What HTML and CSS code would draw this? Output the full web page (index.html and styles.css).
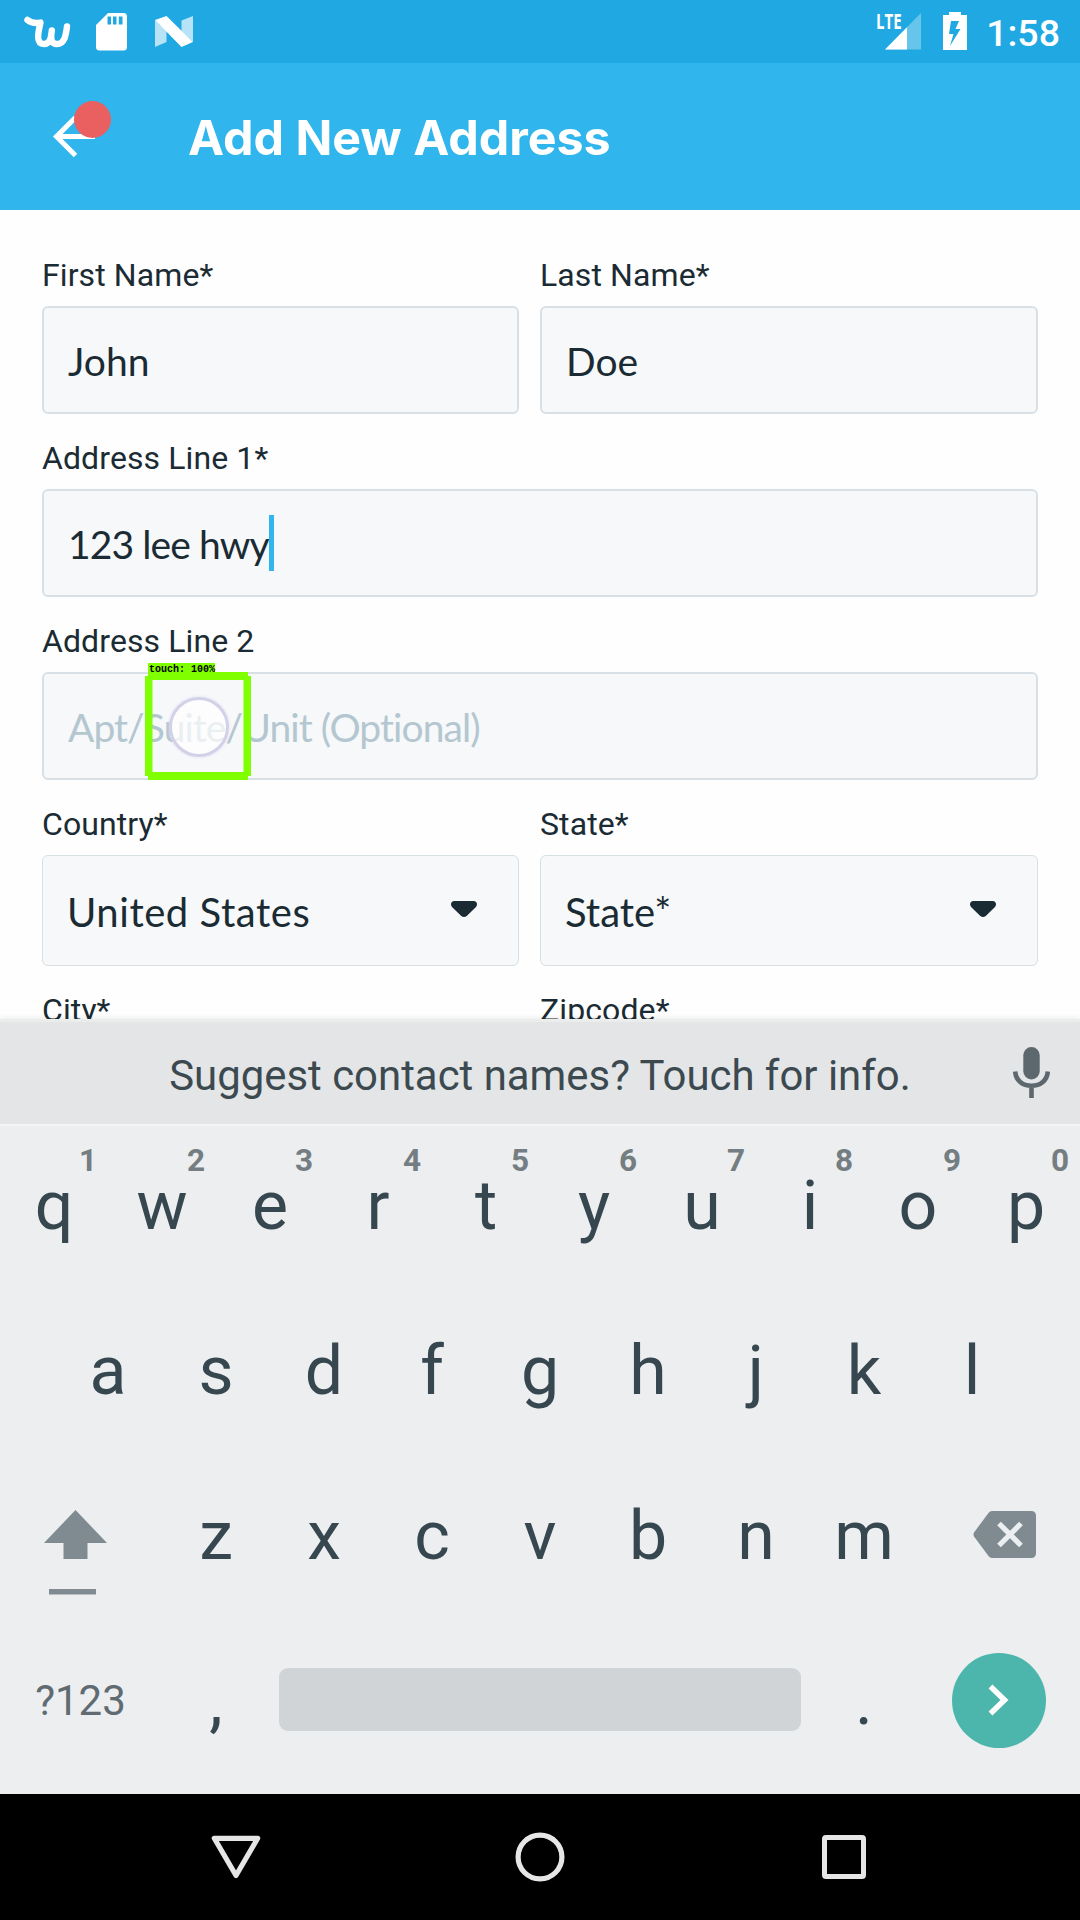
FILE: index.html
```html
<!DOCTYPE html>
<html lang="en">
<head>
<meta charset="utf-8">
<title>Add New Address</title>
<link rel="stylesheet" href="styles.css">
</head>
<body>
<div class="screen">
  <div class="status-bar">
    <div class="status-left">
      <svg class="ic-wish" width="47" height="34" viewBox="0 0 47 34"><path d="M3.500 5C8 8.500 12.500 8.500 16.500 7.500C14.500 16 11 29 20 29C26 29 27 23 27.800 15.500C26.500 24 27 29 33 29C41 29 42 19 43 11.500" fill="none" stroke="#fff" stroke-width="6.400" stroke-linecap="round" stroke-linejoin="round"/></svg>
      <svg class="ic-sd" width="31" height="38" viewBox="0 0 31 38"><path fill="#fff" fill-rule="evenodd" d="M12 0H27.500Q31 0 31 3.500V34Q31 37.500 27.500 37.500H3.500Q0 37.500 0 34V12ZM11.500 3.500V11.500H15V3.500ZM17 3.500V11.500H20.500V3.500ZM22.800 3.500V11.500H26.500V3.500Z"/></svg>
      <svg class="ic-n" width="38" height="31" viewBox="0 0 38 31"><path fill="#fff" fill-opacity=".68" d="M0 4L11.500 15V26L0 31ZM38 0V26L26.500 15V4.500Z"/><path fill="#fff" d="M0 4L11.500 0L38 26L26.500 31Z"/></svg>
    </div>
    <div class="status-right">
      <div class="signal">
        <svg width="46" height="38" viewBox="0 0 46 38"><path fill="#fff" fill-opacity=".32" d="M9 36.500L45 0V36.500Z"/><path fill="#fff" d="M9 36.500L31 14.200V36.500Z"/></svg>
        <span class="lte">LTE</span>
      </div>
      <svg class="ic-batt" width="24" height="38" viewBox="0 0 24 38"><path fill="#fff" fill-rule="evenodd" d="M6 0H18V3H24V38H0V3H6ZM8 9L6 22H10.500L7 34L17.500 17H12.500L16 9Z"/></svg>
      <span class="clock">1:58</span>
    </div>
  </div>

  <header class="app-bar">
    <div class="back">
      <svg width="44" height="44" viewBox="0 0 44 44"><path d="M23.500 2.500L4.500 21.500L23.500 40.500M4.500 21.500H43" fill="none" stroke="#fff" stroke-width="5"/></svg>
      <span class="badge"></span>
    </div>
    <h1 class="title">Add New Address</h1>
  </header>

  <main class="form">
    <div class="row split">
      <div class="field"><div class="label">First Name*</div><div class="input">John</div></div>
      <div class="field"><div class="label">Last Name*</div><div class="input">Doe</div></div>
    </div>
    <div class="row">
      <div class="field"><div class="label">Address Line 1*</div><div class="input"><span class="address">123 lee hwy</span><span class="caret"></span></div></div>
    </div>
    <div class="row">
      <div class="field">
        <div class="label">Address Line 2</div>
        <div class="input"><span class="placeholder">Apt/Suite/Unit (Optional)</span>
          <div class="touch-dot"></div>
          <svg class="touch-box" width="106" height="108" viewBox="0 0 106 108"><path fill="#80ff00" fill-rule="evenodd" d="M3 0H103V4H106V104H103V108H3V104H0V4H3ZM7.500 8V100H98.500V8Z"/></svg>
          <span class="touch-label">touch: 100%</span>
        </div>
      </div>
    </div>
    <div class="row split">
      <div class="field"><div class="label">Country*</div><div class="select"><span class="country">United States</span><svg class="arrow" width="26" height="17" viewBox="0 0 26 17"><path fill="#1b2b33" d="M3.500 0H22.500Q26 0 26 3.500Q26 5.200 24.500 6.600L16 14.700Q13 17.500 10 14.700L1.500 6.600Q0 5.200 0 3.500Q0 0 3.500 0Z"/></svg></div></div>
      <div class="field"><div class="label">State*</div><div class="select"><span>State*</span><svg class="arrow" width="26" height="17" viewBox="0 0 26 17"><path fill="#1b2b33" d="M3.500 0H22.500Q26 0 26 3.500Q26 5.200 24.500 6.600L16 14.700Q13 17.500 10 14.700L1.500 6.600Q0 5.200 0 3.500Q0 0 3.500 0Z"/></svg></div></div>
    </div>
    <div class="row split">
      <div class="field"><div class="label">City*</div></div>
      <div class="field"><div class="label">Zipcode*</div></div>
    </div>
  </main>

  <section class="keyboard">
    <div class="suggest">
      <span class="suggest-text">Suggest contact names? Touch for info.</span>
      <svg class="mic" width="37" height="51" viewBox="0 0 37 51"><rect x="10.300" y="0" width="16.400" height="32.500" rx="8.200" fill="#5c686e"/><path d="M2.200 24.500C2.800 33.500 9.500 38.800 18.500 38.800S34.200 33.500 34.800 24.500M18.500 38.800V51" fill="none" stroke="#5c686e" stroke-width="4.600"/></svg>
    </div>
    <div class="keys">
      <div class="key-row">
        <span class="key">q<b>1</b></span><span class="key">w<b>2</b></span><span class="key">e<b>3</b></span><span class="key">r<b>4</b></span><span class="key">t<b>5</b></span><span class="key">y<b>6</b></span><span class="key">u<b>7</b></span><span class="key">i<b>8</b></span><span class="key">o<b>9</b></span><span class="key">p<b>0</b></span>
      </div>
      <div class="key-row home">
        <span class="key">a</span><span class="key">s</span><span class="key">d</span><span class="key">f</span><span class="key">g</span><span class="key">h</span><span class="key">j</span><span class="key">k</span><span class="key">l</span>
      </div>
      <div class="key-row lower">
        <span class="key shift"><svg width="63" height="85" viewBox="0 0 63 85"><path fill="#7f8b90" d="M31.500 0L63 33H43.500V49H19.500V33H0ZM5 79H52V84.500H5Z"/></svg></span>
        <span class="key">z</span><span class="key">x</span><span class="key">c</span><span class="key">v</span><span class="key">b</span><span class="key">n</span><span class="key">m</span>
        <span class="key backspace"><svg width="63" height="47" viewBox="0 0 63 47"><path fill="#7f8b90" d="M19 0H58Q63 0 63 5V42Q63 47 58 47H19Q17 47 15.500 45L1 25.500Q0 23.500 1 21.500L15.500 2Q17 0 19 0Z"/><path d="M26 12.500L48 34.500M48 12.500L26 34.500" stroke="#eceff1" stroke-width="5.200"/></svg></span>
      </div>
      <div class="key-row bottom">
        <span class="key symbols">?123</span>
        <span class="key">,</span>
        <span class="key space"></span>
        <span class="key">.</span>
        <span class="key enter"><svg width="94" height="95" viewBox="0 0 94 95"><ellipse cx="47" cy="47.500" rx="47" ry="47.500" fill="#4db6ac"/><path d="M38.500 33.500L52.500 47L38.500 60.500" fill="none" stroke="#fff" stroke-width="5.500"/></svg></span>
      </div>
    </div>
  </section>

  <nav class="nav-bar">
    <svg width="50" height="50" viewBox="0 0 50 50"><path d="M3.300 6.300H46.700L25 43.500Z" fill="none" stroke="#e6e6e6" stroke-width="5.200" stroke-linejoin="round"/></svg>
    <svg width="50" height="50" viewBox="0 0 50 50"><circle cx="25" cy="25" r="21.900" fill="none" stroke="#e6e6e6" stroke-width="5.200"/></svg>
    <svg width="50" height="50" viewBox="0 0 50 50"><rect x="5.500" y="5.500" width="39" height="39" rx="1.500" fill="none" stroke="#e6e6e6" stroke-width="5"/></svg>
  </nav>
</div>
</body>
</html>
```
FILE: styles.css
```css
* { box-sizing: border-box; }
body { margin: 0; font-family: Roboto, "Liberation Sans", sans-serif; }
svg { display: block; flex: none; }
.screen { width: 1080px; height: 1920px; display: flex; flex-direction: column; overflow: hidden; background: #fefefe; }

.status-bar { height: 63px; flex: none; background: #1fa8e2; display: flex; justify-content: space-between; padding: 12px 20px 0 24px; }
.status-left, .status-right { display: flex; align-items: flex-start; }
.ic-wish { margin-top: 3px; }
.ic-sd { margin: 1px 0 0 24.500px; }
.ic-n { margin: 4px 0 0 28px; }
.signal { position: relative; margin-top: 1px; }
.lte { position: absolute; left: 0; top: -1px; font: 700 21.500px/18px "Open Sans", sans-serif; color: #fff; transform: scaleX(.7); transform-origin: left; }
.ic-batt { margin-left: 21px; }
.clock { margin-left: 19px; font-size: 37.500px; font-weight: 500; line-height: 42px; color: #fff; }

.app-bar { height: 147px; flex: none; background: #30b5ec; display: flex; align-items: center; padding-left: 52px; }
.back { position: relative; }
.badge { position: absolute; left: 22px; top: -14px; width: 37px; height: 37px; border-radius: 50%; background: #ea6060; }
.title { margin: 0 0 0 92px; padding-top: 3px; font: 700 48.400px/60px Inter, sans-serif; color: #fff; white-space: nowrap; }

.form { height: 809px; flex: none; overflow: hidden; padding: 34px 42px 0; display: flex; flex-direction: column; gap: 13px; color: #1b2b33; }
.row { display: grid; flex: none; }
.split { grid-template-columns: 477px 498px; column-gap: 21px; }
.label { height: 62px; line-height: 62px; font-size: 32px; letter-spacing: .1px; }
.input, .select { font: 400 39px/50px Lato, sans-serif; display: flex; align-items: center; border-radius: 6px; background: #f6f8fa; }
.input { position: relative; height: 108px; border: 2px solid #d8e0e5; padding: 1px 0 0 24px; }
.select { height: 111px; border: 1px solid #d8dfe3; padding: 2px 41px 0 24px; justify-content: space-between; font-size: 40px; }
.arrow { margin-top: -4px; }
.address { letter-spacing: -.9px; }
.country { letter-spacing: .55px; }
.caret { width: 5px; height: 56px; background: #30b5ec; margin-top: -1px; }
.placeholder { color: #b4c7d0; letter-spacing: -.93px; }
.touch-dot { position: absolute; left: 125px; top: 23px; width: 60px; height: 60px; border-radius: 50%; background: rgba(255,255,255,.72); border: 3px solid #d3d1e8; box-shadow: 0 0 3px #dcdaf0; }
.touch-box { position: absolute; left: 101px; top: -2px; }
.touch-label { position: absolute; left: 104px; top: -11px; width: 67px; height: 13px; background: #80ff00; color: #000; font: 700 10px/14px "Liberation Mono", monospace; white-space: nowrap; padding-left: 1px; }

.keyboard { height: 775px; flex: none; position: relative; background: #eceef0; border-top: 3px solid #ebecec; box-shadow: 0 -2px 4px rgba(0,0,0,.06); display: flex; flex-direction: column; }
.suggest { height: 104px; background: #e3e5e7; border-bottom: 2px solid #f3f5f6; display: grid; grid-template-columns: 1fr auto; align-items: center; padding: 0 30px 0 67px; }
.suggest-text { font-size: 41.900px; line-height: 60px; color: #3c4a50; text-align: center; padding-top: 6px; }
.mic { margin-top: -2px; }
.keys { display: flex; flex-direction: column; font-size: 68px; line-height: 160px; color: #37474f; }
.key-row { height: 165px; display: grid; grid-template-columns: repeat(10, 108px); }
.home { padding-left: 54px; }
.lower { grid-template-columns: 162px repeat(7, 108px) 162px; }
.key { position: relative; text-align: center; }
.key b { position: absolute; left: 68px; width: 40px; top: 16px; font-size: 31.500px; line-height: 38px; color: #747d81; }
.shift { padding: 54px 0 0 44px; }
.backspace { padding: 55px 0 0 55px; }
.bottom { grid-template-columns: 162px 108px 540px 108px 162px; }
.symbols { font-size: 42px; color: #5f6b71; padding-right: 1px; }
.space { width: 522px; height: 63px; margin: 47px 0 0 9px; border-radius: 9px; background: #d0d4d7; }
.enter { padding: 32px 0 0 34px; }

.nav-bar { flex: 1; background: #000; display: flex; justify-content: center; gap: 254px; align-items: center; }
```
